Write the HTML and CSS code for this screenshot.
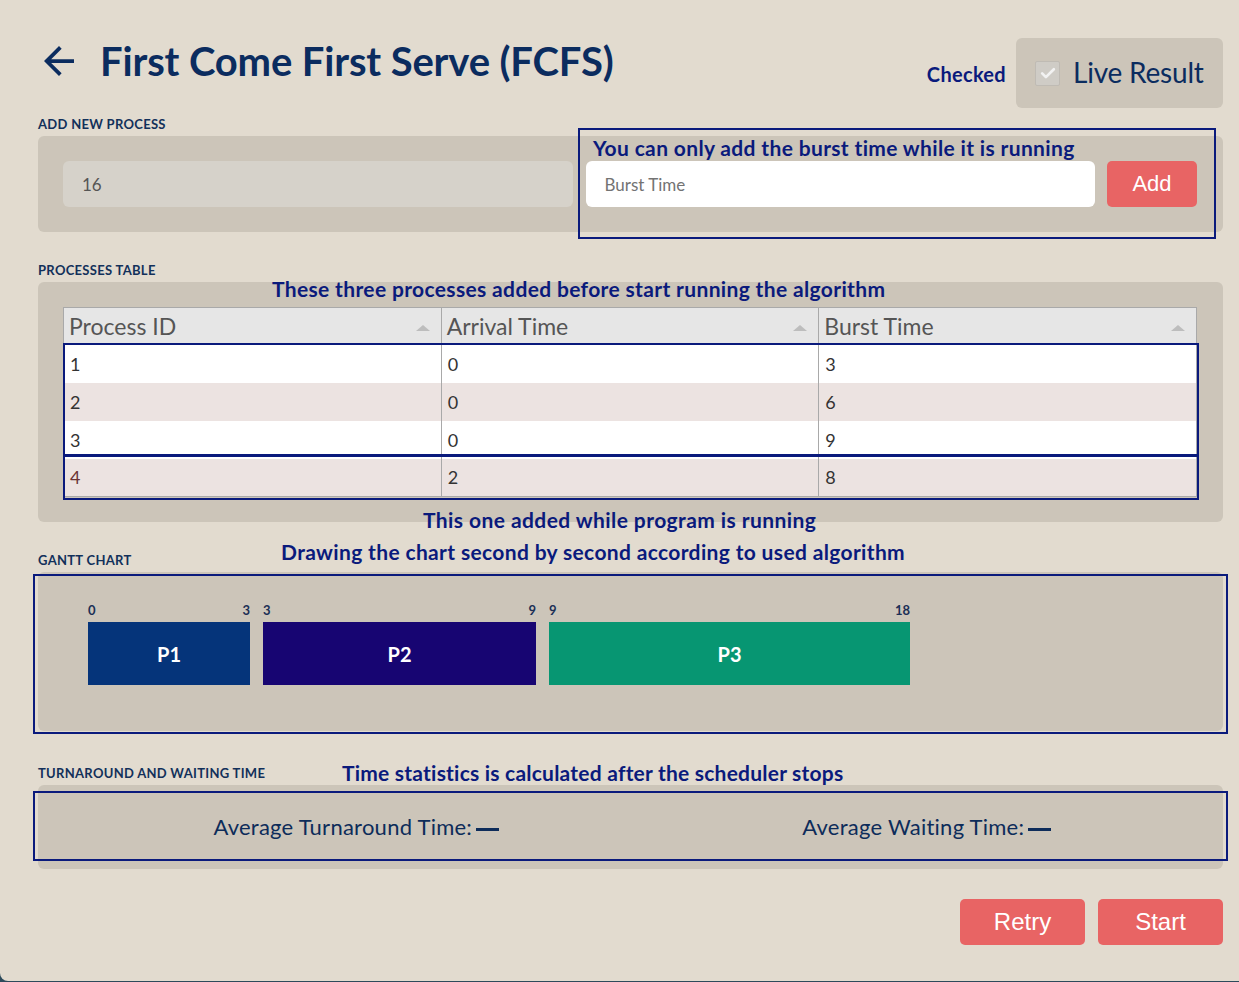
FILE: index.html
```html
<!DOCTYPE html>
<html lang="en">
<head>
<meta charset="utf-8">
<title>First Come First Serve (FCFS)</title>
<link rel="stylesheet" href="styles.css">
</head>
<body>
<div class="page">
  <header class="top">
    <div class="title-group">
      <svg class="back" viewBox="4 4 16 16" aria-hidden="true"><path d="M20 11H7.83l5.59-5.59L12 4l-8 8 8 8 1.41-1.41L7.83 13H20v-2z"/></svg>
      <h1 class="title">First Come First Serve (FCFS)</h1>
    </div>
    <div class="live-group">
      <span class="note note-checked">Checked</span>
      <label class="live-box">
        <span class="checkbox"><svg viewBox="0 0 24 24" aria-hidden="true"><path d="M5 12.5l4.5 4.5L19 7.5"/></svg></span>
        <span class="live-text">Live Result</span>
      </label>
    </div>
  </header>

  <section class="block block-add">
    <h2 class="label">ADD NEW PROCESS</h2>
    <div class="panel panel-add">
      <div class="field field-disabled">16</div>
      <div class="field field-input">Burst Time</div>
      <button class="btn btn-add">Add</button>
      <div class="mark mark-add"><span class="note note-add">You can only add the burst time while it is running</span></div>
    </div>
  </section>

  <section class="block block-table">
    <h2 class="label">PROCESSES TABLE</h2>
    <div class="panel panel-table">
      <span class="note note-three">These three processes added before start running the algorithm</span>
      <div class="table-wrap">
        <table class="ptable">
          <thead>
            <tr>
              <th><div class="th-in"><span>Process ID</span><i class="sort"></i></div></th>
              <th><div class="th-in"><span>Arrival Time</span><i class="sort"></i></div></th>
              <th><div class="th-in"><span>Burst Time</span><i class="sort"></i></div></th>
            </tr>
          </thead>
          <tbody>
            <tr><td>1</td><td>0</td><td>3</td></tr>
            <tr class="alt"><td>2</td><td>0</td><td>6</td></tr>
            <tr><td>3</td><td>0</td><td>9</td></tr>
            <tr class="alt new"><td>4</td><td>2</td><td>8</td></tr>
          </tbody>
        </table>
        <div class="mark mark-rows"></div>
        <div class="mark mark-new"></div>
      </div>
      <span class="note note-one">This one added while program is running</span>
    </div>
  </section>

  <section class="block block-gantt">
    <h2 class="label">GANTT CHART</h2>
    <span class="note note-draw">Drawing the chart second by second according to used algorithm</span>
    <div class="panel panel-gantt">
      <div class="chart">
        <div class="seg" style="width:162px">
          <div class="ticks"><span>0</span><span>3</span></div>
          <div class="bar bar-p1">P1</div>
        </div>
        <div class="seg" style="width:273px">
          <div class="ticks"><span>3</span><span>9</span></div>
          <div class="bar bar-p2">P2</div>
        </div>
        <div class="seg" style="width:361px">
          <div class="ticks"><span>9</span><span>18</span></div>
          <div class="bar bar-p3">P3</div>
        </div>
      </div>
      <div class="mark mark-gantt"></div>
    </div>
  </section>

  <section class="block block-stats">
    <h2 class="label">TURNAROUND AND WAITING TIME</h2>
    <span class="note note-stats">Time statistics is calculated after the scheduler stops</span>
    <div class="panel panel-stats">
      <div class="stat stat-left">Average Turnaround Time:<i class="dash"></i></div>
      <div class="stat stat-right">Average Waiting Time:<i class="dash"></i></div>
      <div class="mark mark-stats"></div>
    </div>
  </section>

  <div class="actions">
    <button class="btn btn-big">Retry</button>
    <button class="btn btn-big">Start</button>
  </div>
</div>
</body>
</html>
```
FILE: styles.css
```css
* { box-sizing: border-box; }

html, body {
  margin: 0;
  background: #2d4a5b;
}

body {
  font-family: Lato, "Noto Sans", sans-serif;
  color: #0b2c5f;
}

.page {
  position: relative;
  height: 981px;
  background: #e2dbcf;
  border-bottom-left-radius: 8px;
  padding: 38px 16px 0 38px;
}

/* ---------- header ---------- */
.top {
  display: flex;
  justify-content: space-between;
  align-items: flex-start;
  height: 70px;
}

.title-group {
  display: flex;
  align-items: center;
  margin-left: 6px;
  margin-top: -1px;
}

.back {
  width: 30px;
  height: 30px;
  fill: #0b2c5f;
}

.title {
  margin: 0 0 0 26px;
  font-size: 40px;
  line-height: 48px;
  font-weight: 700;
  color: #0b2c5f;
  letter-spacing: -0.15px;
}

.live-group {
  display: flex;
  align-items: center;
  height: 70px;
}

.note {
  font-family: Lato, "Noto Sans", sans-serif;
  font-weight: 700;
  font-size: 21px;
  line-height: 25px;
  letter-spacing: 0.35px;
  color: #0a1a7c;
  white-space: nowrap;
}

.note-checked {
  margin: 3px 10px 0 0;
  font-size: 20px;
  letter-spacing: 0.3px;
}

.live-box {
  display: flex;
  align-items: center;
  width: 207px;
  height: 70px;
  padding-left: 19px;
  background: #ccc5b9;
  border-radius: 6px;
}

.checkbox {
  width: 25px;
  height: 25px;
  background: #cfccc6;
  border: 1px solid #bfbbb4;
  border-radius: 2px;
  display: flex;
  align-items: center;
  justify-content: center;
}

.checkbox svg {
  width: 20px;
  height: 20px;
  fill: none;
  stroke: #f2f2f2;
  stroke-width: 3.2;
  stroke-linecap: round;
  stroke-linejoin: round;
}

.live-text {
  margin-left: 13px;
  margin-top: -2px;
  font-size: 28px;
  line-height: 34px;
  letter-spacing: -0.2px;
  color: #0b2c5f;
}

/* ---------- sections ---------- */
.block {
  position: relative;
}

.label {
  margin: 0 0 4px 0;
  font-size: 13px;
  line-height: 16px;
  font-weight: 700;
  letter-spacing: 0.3px;
  color: #12305a;
}

.block-add { margin-top: 8px; }
.block-table { margin-top: 30px; }
.block-gantt { margin-top: 30px; }
.block-stats { margin-top: 34px; }

.panel {
  position: relative;
  background: #ccc5b9;
  border-radius: 6px;
}

.mark {
  position: absolute;
  border: 2px solid #0a1a7c;
  pointer-events: none;
}

/* ---------- add process ---------- */
.panel-add {
  display: flex;
  align-items: center;
  gap: 13px;
  height: 96px;
  padding: 0 26px 0 25px;
}

.field {
  flex: 1;
  height: 46px;
  border-radius: 6px;
  display: flex;
  align-items: center;
  padding-left: 19px;
  font-size: 17px;
}

.field-disabled {
  background: #d6d2ca;
  color: #555;
}

.field-input {
  background: #ffffff;
  color: #737373;
}

.btn {
  border: none;
  background: #e86464;
  color: #fff;
  font-family: "Liberation Sans", Arial, sans-serif;
  border-radius: 5px;
  padding: 0;
}

.btn-add {
  width: 90px;
  height: 46px;
  font-size: 22px;
  margin-left: -1px;
}

.mark-add {
  left: 540px;
  top: -8px;
  width: 638px;
  height: 111px;
  padding: 5px 0 0 13px;
}

/* ---------- table ---------- */
.panel-table {
  height: 240px;
  padding: 25px 26px 0 25px;
}

.note-three {
  position: absolute;
  left: 234px;
  top: -6px;
}

.note-one {
  position: absolute;
  left: 385px;
  top: 225px;
  letter-spacing: 0.42px;
}

.table-wrap {
  position: relative;
}

.ptable {
  width: 1134px;
  border-collapse: collapse;
  table-layout: fixed;
}

.ptable th {
  height: 37px;
  padding: 0;
  background: #e6e6e6;
  border: 1px solid #a9a9a9;
  text-align: left;
  font-weight: 400;
}

.th-in {
  display: flex;
  align-items: center;
  justify-content: space-between;
  padding: 0 11px 0 5px;
  font-size: 23px;
  line-height: 27px;
  color: #555;
}

.sort {
  width: 0;
  height: 0;
  border-left: 7px solid transparent;
  border-right: 7px solid transparent;
  border-bottom: 6px solid #bdbdbd;
  margin-top: 3px;
}

.ptable td {
  height: 38px;
  padding: 0 0 0 6px;
  font-size: 18px;
  color: #333;
  background: #ffffff;
  border-left: 1px solid #a9a9a9;
  border-right: 1px solid #a9a9a9;
}

.ptable tr.alt td {
  background: #ece3e1;
}

.ptable tr.new td {
  border-bottom: 1px solid #a9a9a9;
}

.ptable tr.new td:first-child {
  color: #6a3434;
}

.mark-rows {
  left: 0;
  right: -2px;
  top: 36px;
  height: 113px;
}

.mark-new {
  left: 0;
  right: -2px;
  top: 148px;
  height: 45px;
}

/* ---------- gantt ---------- */
.note-draw {
  position: absolute;
  left: 243px;
  top: -13px;
}

.panel-gantt {
  height: 159px;
  padding: 31px 0 0 50px;
}

.chart {
  display: flex;
  gap: 13px;
}

.seg {
  display: flex;
  flex-direction: column;
}

.ticks {
  display: flex;
  justify-content: space-between;
  font-size: 13px;
  line-height: 15px;
  font-weight: 700;
  color: #1b2f55;
  margin-bottom: 4px;
}

.bar {
  height: 63px;
  display: flex;
  align-items: center;
  justify-content: center;
  color: #fff;
  font-weight: 700;
  font-size: 20px;
}

.bar-p1 { background: #05347a; }
.bar-p2 { background: #170572; }
.bar-p3 { background: #079672; }

.mark-gantt {
  left: -5px;
  right: -5px;
  top: 2px;
  height: 160px;
}

/* ---------- stats ---------- */
.note-stats {
  position: absolute;
  left: 304px;
  top: -5px;
  letter-spacing: 0.22px;
}

.panel-stats {
  display: grid;
  grid-template-columns: 1fr 1fr;
  align-items: center;
  height: 84px;
}

.stat {
  text-align: center;
  font-size: 22px;
  line-height: 26px;
  color: #0d2c5a;
  letter-spacing: 0.25px;
}

.stat-left { padding-left: 44px; }

.dash {
  display: inline-block;
  width: 23px;
  height: 3px;
  background: #0d2c5a;
  margin-left: 4px;
  vertical-align: middle;
}

.mark-stats {
  left: -5px;
  right: -5px;
  top: 6px;
  height: 70px;
}

/* ---------- actions ---------- */
.actions {
  display: flex;
  justify-content: flex-end;
  gap: 13px;
  margin-top: 30px;
}

.btn-big {
  width: 125px;
  height: 46px;
  font-size: 24px;
}
```
